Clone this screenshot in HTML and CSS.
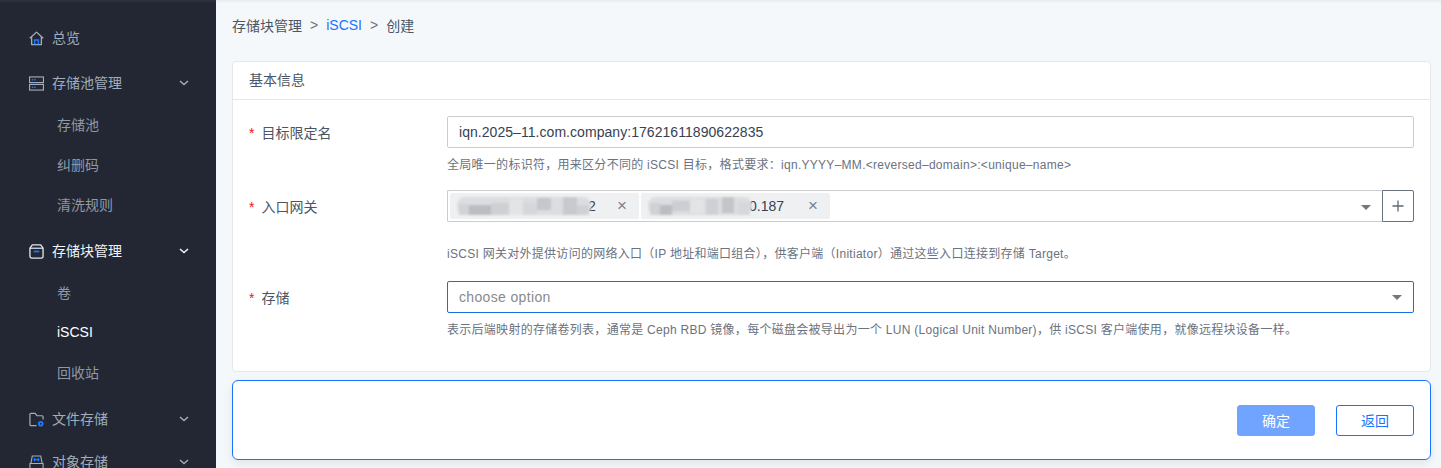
FILE: index.html
```html
<!DOCTYPE html>
<html lang="zh-CN">
<head>
<meta charset="utf-8">
<title>iSCSI 创建</title>
<link rel="stylesheet" href="styles.css">
</head>
<body>
<div class="app">
  <nav class="sidebar">
    <a class="nav-item">
      <svg class="nav-icon" viewBox="0 0 16 16" fill="none"><path d="M.8 7.800 8 1.200l7.200 6.600M2.800 6.500v8h10.400v-8" stroke="#a3adba" stroke-width="1.400" stroke-linejoin="round"/><path d="M6 14.500V9.500h4v5" stroke="#1f78ff" stroke-width="1.600"/></svg>
      <span class="nav-label">总览</span>
    </a>
    <a class="nav-item nav-item-second">
      <svg class="nav-icon" viewBox="0 0 16 16" fill="none"><rect x=".6" y="1" width="14.800" height="6" stroke="#a3adba" stroke-width="1.200"/><rect x=".6" y="9" width="14.800" height="6" stroke="#a3adba" stroke-width="1.200"/><path d="M3 4h1.500M5.500 4H7M3 12h1.500M5.500 12H7" stroke="#1f78ff" stroke-width="1.400"/></svg>
      <span class="nav-label">存储池管理</span>
      <svg class="chevron" viewBox="0 0 10 6" fill="none"><path d="M1 1l4 3.600L9 1" stroke="currentColor" stroke-width="1.400"/></svg>
    </a>
    <div class="submenu">
      <a class="sub-item">存储池</a>
      <a class="sub-item">纠删码</a>
      <a class="sub-item">清洗规则</a>
    </div>
    <a class="nav-item nav-item-open">
      <svg class="nav-icon" viewBox="0 0 16 16" fill="none"><path d="M3.500 1h9L15 4.500V13a2 2 0 0 1-2 2H3a2 2 0 0 1-2-2V4.500z" stroke="#e4e7ec" stroke-width="1.400" stroke-linejoin="round"/><path d="M1 4.500h14" stroke="#e4e7ec" stroke-width="1.300"/><path d="M5 8h6" stroke="#1f78ff" stroke-width="1.800"/></svg>
      <span class="nav-label">存储块管理</span>
      <svg class="chevron" viewBox="0 0 10 6" fill="none"><path d="M1 1l4 3.600L9 1" stroke="currentColor" stroke-width="1.500"/></svg>
    </a>
    <div class="submenu">
      <a class="sub-item">卷</a>
      <a class="sub-item sub-item-active">iSCSI</a>
      <a class="sub-item">回收站</a>
    </div>
    <a class="nav-item">
      <svg class="nav-icon" viewBox="0 0 16 16" fill="none"><path d="M8 14.500H2A1 1 0 0 1 1 13.500V2.500a1 1 0 0 1 1-1h4.500L8.500 4h5.500a1 1 0 0 1 1 1v3" stroke="#a3adba" stroke-width="1.300"/><circle cx="12.500" cy="12.500" r="2" stroke="#1f78ff" stroke-width="2"/></svg>
      <span class="nav-label">文件存储</span>
      <svg class="chevron" viewBox="0 0 10 6" fill="none"><path d="M1 1l4 3.600L9 1" stroke="currentColor" stroke-width="1.400"/></svg>
    </a>
    <a class="nav-item nav-item-last">
      <svg class="nav-icon" viewBox="0 0 16 16" fill="none"><path d="M2 9 3.500 1h9L14 9M1 9h14v6H1z" stroke="#a3adba" stroke-width="1.200"/><path d="M5 5h6M5 5l1.500-1.500M5 5l1.500 1.500M11 5 9.500 3.500M11 5 9.500 6.500" stroke="#1f78ff" stroke-width="1.300"/></svg>
      <span class="nav-label">对象存储</span>
      <svg class="chevron" viewBox="0 0 10 6" fill="none"><path d="M1 1l4 3.600L9 1" stroke="currentColor" stroke-width="1.400"/></svg>
    </a>
  </nav>
  <main class="main">
    <div class="breadcrumb">
      <span>存储块管理</span>
      <span class="crumb-sep">&gt;</span>
      <a class="crumb-link">iSCSI</a>
      <span class="crumb-sep">&gt;</span>
      <span>创建</span>
    </div>
    <section class="card">
      <h2 class="card-title">基本信息</h2>
      <div class="form">
        <div class="form-row form-row-name">
          <label class="form-label"><span class="required">*</span>目标限定名</label>
          <div class="form-field">
            <div class="input">iqn.2025–11.com.company:17621611890622835</div>
            <p class="help">全局唯一的标识符，用来区分不同的 iSCSI 目标，格式要求：iqn.YYYY–MM.&lt;reversed–domain&gt;:&lt;unique–name&gt;</p>
          </div>
        </div>
        <div class="form-row form-row-gateway">
          <label class="form-label"><span class="required">*</span>入口网关</label>
          <div class="form-field">
            <div class="select-group">
              <div class="multi-select">
                <span class="tag">
                  <span class="tag-text"><svg class="mosaic mosaic-a" viewBox="0 0 134 18" preserveAspectRatio="none"><rect width="134" height="18" rx="8" fill="#dcdde0"/><rect x="2" y="7" width="10" height="11" fill="#d2d3d6"/><rect x="12" y="8" width="22" height="10" fill="#bcbdc1"/><rect x="34" y="6" width="18" height="12" fill="#cfd0d3"/><rect x="52" y="2" width="14" height="16" fill="#e3e4e6"/><rect x="66" y="6" width="14" height="12" fill="#d6d7da"/><rect x="80" y="1" width="14" height="12" fill="#c6c7ca"/><rect x="94" y="8" width="12" height="10" fill="#dcdde0"/><rect x="106" y="0" width="14" height="18" fill="#c8c9cc"/><rect x="120" y="8" width="12" height="10" fill="#d0d1d4"/></svg><span class="tag-tail">2</span></span>
                  <span class="tag-close">×</span>
                </span>
                <span class="tag">
                  <span class="tag-text"><svg class="mosaic mosaic-b" viewBox="0 0 104 18" preserveAspectRatio="none"><rect width="104" height="18" rx="8" fill="#dcdde0"/><rect x="2" y="6" width="10" height="12" fill="#d0d1d4"/><rect x="12" y="8" width="12" height="10" fill="#bcbdc1"/><rect x="24" y="4" width="18" height="10" fill="#cdced1"/><rect x="42" y="2" width="14" height="14" fill="#e3e4e6"/><rect x="58" y="2" width="12" height="16" fill="#cfd0d3"/><rect x="74" y="0" width="12" height="16" fill="#c4c5c8"/><rect x="90" y="6" width="12" height="12" fill="#d6d7da"/></svg><span class="tag-tail">0.187</span></span>
                  <span class="tag-close">×</span>
                </span>
                <span class="caret caret-gateway"></span>
              </div>
              <button class="add-btn" type="button"><svg viewBox="0 0 12 12" fill="none"><path d="M6 .5v11M.5 6h11" stroke="#5f6773" stroke-width="1.300"/></svg></button>
            </div>
            <p class="help help-gateway">iSCSI 网关对外提供访问的网络入口（IP 地址和端口组合），供客户端（Initiator）通过这些入口连接到存储 Target。</p>
          </div>
        </div>
        <div class="form-row form-row-storage">
          <label class="form-label"><span class="required">*</span>存储</label>
          <div class="form-field">
            <div class="select-focused"><span class="placeholder">choose option</span><span class="caret"></span></div>
            <p class="help">表示后端映射的存储卷列表，通常是 Ceph RBD 镜像，每个磁盘会被导出为一个 LUN (Logical Unit Number)，供 iSCSI 客户端使用，就像远程块设备一样。</p>
          </div>
        </div>
      </div>
    </section>
    <footer class="actions">
      <button class="btn btn-primary" type="button">确定</button>
      <button class="btn btn-outline" type="button">返回</button>
    </footer>
  </main>
</div>
</body>
</html>
```
FILE: styles.css
```css
* { box-sizing: border-box; }
html, body { margin: 0; height: 100%; overflow: hidden; }
body {
  font-family: "Liberation Sans", "Noto Sans CJK SC", sans-serif;
  font-size: 14px;
  color: #4b5563;
}
.app { display: flex; height: 468px; overflow: hidden; }

.sidebar {
  flex: 0 0 216px;
  background: #222733;
  padding-top: 16px;
  box-shadow: inset 0 2px 0 #2b303c;
  overflow: hidden;
}
.nav-item {
  display: flex;
  align-items: center;
  height: 44px;
  padding: 0 27px 0 29px;
  color: #a3adba;
}
.nav-item-second { margin-top: 1px; }
.nav-item-open { color: #f2f4f7; }
.nav-item-last { margin-top: -1px; }
.nav-icon { width: 15px; height: 15px; margin-right: 8px; flex: none; }
.nav-label { flex: 1; line-height: 20px; }
.chevron { width: 10px; height: 6px; flex: none; }
.submenu { margin: -1px 0 5px; }
.sub-item {
  display: flex;
  align-items: center;
  height: 40px;
  padding-left: 57px;
  color: #8f98a6;
}
.sub-item-active { color: #fff; }

.main {
  flex: 1;
  min-width: 0;
  background: #f5f8fb;
  padding: 0 10px 0 16px;
  box-shadow: inset 0 3px 3px -2px #e3e5e9;
}
.breadcrumb {
  display: flex;
  align-items: center;
  gap: 8px;
  height: 50px;
  margin-bottom: 11px;
  color: #4b5563;
}
.crumb-sep { color: #6b7280; }
.crumb-link { color: #1a73ff; }

.card {
  background: #fff;
  border: 1px solid #e5e7eb;
  border-radius: 4px;
  height: 311px;
}
.card-title {
  margin: 0;
  height: 38px;
  padding-left: 16px;
  font-size: 14px;
  font-weight: 400;
  line-height: 37px;
  color: #4b5563;
  border-bottom: 1px solid #e5e7eb;
}
.form { padding: 16px 16px 0; }
.form-row { display: flex; }
.form-label {
  flex: 0 0 198px;
  padding-top: 1px;
  line-height: 32px;
  color: #4b5563;
}
.required { color: #f01414; margin-right: 7px; }
.form-field { flex: 1; min-width: 0; }
.form-row-name { margin-bottom: 16px; }
.form-row-gateway { margin-bottom: 18px; }
.input {
  height: 32px;
  border: 1px solid #ccc;
  border-radius: 2px;
  padding: 0 11px;
  line-height: 30px;
  letter-spacing: .05px;
  color: #374151;
}
.help {
  margin: 8px 0 0;
  font-size: 12px;
  line-height: 18px;
  letter-spacing: .28px;
  color: #6b7280;
}
.help-gateway { margin-top: 23px; }

.select-group { display: flex; height: 32px; }
.multi-select {
  flex: 1;
  display: flex;
  align-items: center;
  gap: 2px;
  padding-left: 2px;
  border: 1px solid #ccc;
  border-right: 0;
  border-radius: 2px 0 0 2px;
  position: relative;
}
.tag {
  display: flex;
  align-items: center;
  justify-content: space-between;
  width: 189px;
  height: 26px;
  padding: 0 12px 0 7px;
  background: #eef0f2;
  border-radius: 2px;
}
.tag-text { display: flex; align-items: center; color: #374151; }
.mosaic { height: 18px; filter: blur(1px); position: relative; z-index: 1; }
.mosaic-a { width: 134px; }
.mosaic-b { width: 104px; }
.tag-tail { margin-left: -3px; }
.tag-close { color: #7b838e; font-size: 17px; line-height: 20px; }
.caret {
  width: 0;
  height: 0;
  border-left: 5px solid transparent;
  border-right: 5px solid transparent;
  border-top: 5px solid #777;
}
.caret-gateway { position: absolute; right: 11px; top: 14px; }
.add-btn {
  flex: 0 0 32px;
  display: flex;
  align-items: center;
  justify-content: center;
  padding: 0;
  background: #fff;
  border: 1px solid #6b7280;
  border-radius: 0 2px 2px 0;
}
.add-btn svg { width: 12px; height: 12px; }
.select-focused {
  display: flex;
  align-items: center;
  justify-content: space-between;
  height: 32px;
  padding: 0 11px;
  border: 1px solid #1a6fe0;
  border-radius: 2px;
}
.placeholder { color: #8a8a8a; letter-spacing: .35px; }

.actions {
  display: flex;
  justify-content: flex-end;
  align-items: center;
  gap: 21px;
  height: 80px;
  margin-top: 8px;
  padding: 0 16px 0 0;
  background: #fff;
  border: 1px solid #1a73ff;
  border-radius: 6px;
  box-shadow: 0 4px 10px rgba(0, 0, 0, .08);
}
.btn {
  width: 78px;
  height: 31px;
  padding: 0;
  border-radius: 3px;
  font: inherit;
}
.btn-primary { background: #70a4ff; border: 1px solid #70a4ff; color: #fff; }
.btn-outline { background: #fff; border: 1px solid #1a73ff; color: #1a73ff; }
```
